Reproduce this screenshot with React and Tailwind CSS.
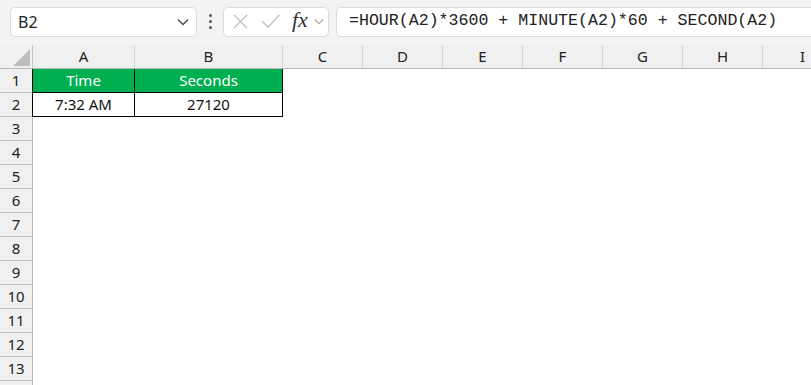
import React from "react";

const cols = [
  { id: "A", w: "w-[102px]" },
  { id: "B", w: "w-[148px]" },
  { id: "C", w: "w-[80px]" },
  { id: "D", w: "w-[80px]" },
  { id: "E", w: "w-[80px]" },
  { id: "F", w: "w-[80px]" },
  { id: "G", w: "w-[80px]" },
  { id: "H", w: "w-[80px]" },
  { id: "I", w: "w-[80px]" },
];

const rows = [1, 2, 3, 4, 5, 6, 7, 8, 9, 10, 11, 12, 13, 14];

const Chevron = ({ className }) => (
  <svg viewBox="0 0 12 8" className={className} fill="none" stroke="currentColor" strokeWidth="1.3">
    <path d="M1 1.5 L6 6.5 L11 1.5" />
  </svg>
);

const Toolbar = () => (
  <div className="flex items-center h-[45px] bg-[#f3f3f3] pb-[2px]">
    {/* name box */}
    <div className="ml-[10px] w-[187px] h-[30px] bg-white border border-[#dcdcdc] rounded-[5px] flex items-center justify-between pl-[7px] pr-[7px]">
      <span className="text-[16px] text-[#222]">B2</span>
      <Chevron className="w-[12px] h-[8px] text-[#444]" />
    </div>
    {/* dots */}
    <div className="w-[26px] flex flex-col items-center gap-[3px]">
      <span className="w-[3px] h-[3px] bg-[#555] rounded-full" />
      <span className="w-[3px] h-[3px] bg-[#555] rounded-full" />
      <span className="w-[3px] h-[3px] bg-[#555] rounded-full" />
    </div>
    {/* cancel / enter / fx */}
    <div className="w-[106px] h-[30px] bg-white border border-[#dcdcdc] rounded-[5px] flex items-center pl-[9px]">
      <svg viewBox="0 0 16 16" className="w-[15px] h-[15px]" fill="none" stroke="#b3b3b3" strokeWidth="1.2">
        <path d="M1 1 L15 15 M15 1 L1 15" />
      </svg>
      <svg viewBox="0 0 20 16" className="ml-[13px] w-[20px] h-[15px]" fill="none" stroke="#b3b3b3" strokeWidth="1.2">
        <path d="M1 8 L7 14 L19 1" />
      </svg>
      <span className="ml-[11px] text-[22px] italic text-[#333] leading-none -mt-[3px]" style={{ fontFamily: '"Liberation Serif", serif' }}>
        fx
      </span>
      <Chevron className="ml-[6px] w-[10px] h-[7px] text-[#999]" />
    </div>
    {/* formula */}
    <div className="ml-[7px] flex-1 h-[30px] bg-white border border-[#dcdcdc] border-r-0 rounded-l-[5px] flex items-center pl-[12px]">
      <span className="text-[16.6px] text-[#222] whitespace-nowrap" style={{ fontFamily: '"Liberation Mono", monospace' }}>
        =HOUR(A2)*3600 + MINUTE(A2)*60 + SECOND(A2)
      </span>
    </div>
  </div>
);

const HeaderRow = () => (
  <div className="flex h-[24px] bg-[#f0f0f0] border-b border-[#b8b8b8]">
    <div className="relative w-[33px] shrink-0 border-r border-[#c8c8c8]">
      <svg viewBox="0 0 17 17" className="absolute right-[2px] bottom-[2px] w-[17px] h-[17px]">
        <polygon points="17,0 17,17 0,17" fill="#bdbdbd" />
      </svg>
    </div>
    {cols.map((c) => (
      <div key={c.id} className={`${c.w} shrink-0 border-r border-[#d6d6d6] flex items-center justify-center text-[15px] text-[#222]`}>
        {c.id}
      </div>
    ))}
  </div>
);

const cellContent = {
  "1A": { text: "Time", head: true },
  "1B": { text: "Seconds", head: true },
  "2A": { text: "7:32 AM" },
  "2B": { text: "27120" },
};

const Row = ({ n }) => (
  <div className="flex h-[24px]">
    <div className="w-[33px] shrink-0 bg-[#f0f0f0] border-r border-b border-[#bdbdbd] flex items-center justify-center text-[15px] text-[#222]">
      {n < 14 ? n : null}
    </div>
    {cols.map((c) => {
      const cell = cellContent[`${n}${c.id}`];
      if (!cell) return <div key={c.id} className={`${c.w} shrink-0`} />;
      return (
        <div
          key={c.id}
          className={`${c.w} shrink-0 flex items-center justify-center text-[15px] border-r border-b border-black ${
            c.id === "A" ? "border-l -ml-[1px] w-[103px]" : ""
          } ${cell.head ? "bg-[#00b050] text-white" : "bg-white text-[#111]"}`}
        >
          {cell.text}
        </div>
      );
    })}
  </div>
);

export default function App() {
  return (
    <div className="w-[811px] h-[385px] overflow-hidden bg-white" style={{ fontFamily: '"Noto Sans", "Liberation Sans", sans-serif' }}>
      <Toolbar />
      <HeaderRow />
      {rows.map((n) => (
        <Row key={n} n={n} />
      ))}
    </div>
  );
}
